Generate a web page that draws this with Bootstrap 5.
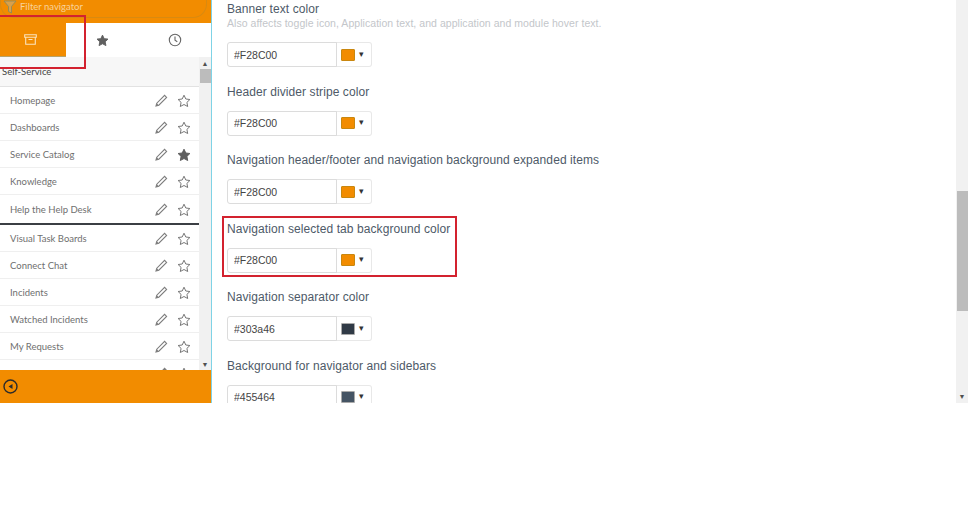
<!DOCTYPE html>
<html lang="en">
<head>
    <meta charset="UTF-8">
    <title>Theme colors</title>
    <link rel="stylesheet" href="https://cdn.jsdelivr.net/npm/bootstrap@5.3.0/dist/css/bootstrap.min.css">
    <style>
        body { background: #fff; font-family: "Liberation Sans", Arial, sans-serif; overflow: hidden; }
        .app-frame { height: 403px; width: 968px; position: relative; overflow: hidden; }

        /* left navigator */
        .nav-side { width: 212px; border-right: 1px solid #7fd3e6; flex: none; font-family: Lato, sans-serif; }
        .filter-bar { height: 23px; background: #f28c00; flex: none; overflow: hidden; padding: 0 4px 0 0; }
        .filter-pill { height: 18px; border: 1px solid #d98a10; border-top: 0; border-radius: 0 0 14px 14px; font-size: 9.5px; color: #f9d29a; padding-left: 19px; line-height: 14px; position: relative; }
        .filter-pill svg { position: absolute; left: 2px; top: 0; }
        .tab-row { height: 34px; flex: none; }
        .tab-item { height: 34px; }
        .tab-on { width: 66px; background: #f28c00; border-bottom: 1px solid #b7a36b; padding-right: 6px; }
        .tab-off { width: 72px; }
        .tab-clock { padding-left: 2px; }
        .nav-body { min-height: 0; }
        .nav-list { overflow: hidden; }
        .group-head { height: 30px; background: #f7f7f7; border-bottom: 1px solid #e2e2e2; font-size: 9.5px; color: #444; padding: 9px 0 0 2px; line-height: 12px; }
        .nav-row { height: 27.1px; border-bottom: 1px solid #efefef; font-size: 9.5px; color: #6f6f6f; padding: 2px 8px 0 10px; flex: none; }
        .nav-row.sep { border-bottom: 2px solid #3b3f44; height: 30px; }
        .nav-row.low { height: 27px; }
        .icon-pair { gap: 9px; }
        .scroll-rail { width: 12px; background: #f1f1f1; flex: none; position: relative; }
        .scroll-arrow { height: 12px; color: #505050; font-size: 7px; line-height: 12px; text-align: center; flex: none; }
        .scroll-thumb { background: #bcbcbc; margin-left: 1px; }
        .thumb-nav { height: 14px; }
        .nav-foot { height: 33px; background: #f28c00; flex: none; padding-left: 3px; }

        /* main settings column */
        .main-col { min-width: 0; overflow: hidden; }
        .main-inner { padding: 0 0 0 15px; }
        .set-block { height: 68.5px; padding-top: 17px; }
        .set-block.first { height: 65.5px; padding-top: 0; }
        .set-title { font-size: 12px; line-height: 18px; color: #4e5a68; letter-spacing: .08px; }
        .set-hint { font-size: 10.5px; line-height: 13px; color: #c3c6ca; letter-spacing: .05px; margin-top: -1px; }
        .set-gap { padding-top: 10px; }
        .set-gap.with-hint { padding-top: 12px; }
        .color-group { width: 145px; height: 25px; flex-wrap: nowrap; }
        .color-group .form-control { height: 25px; min-height: 25px; font-size: 10.5px; font-family: "Liberation Sans", Arial, sans-serif; color: #444; padding: 0 6px; border-color: #dcdcdc; border-radius: 3px 0 0 3px; box-shadow: none; }
        .color-btn { width: 36px; flex: none; height: 25px; padding: 0 0 0 4px; border: 1px solid #e8e8e8; border-left-color: #cfcfcf; border-radius: 0 3px 3px 0; background: #fff; font-size: 9px; color: #333; gap: 4px; }
        .swatch { width: 14px; height: 12px; border: 1px solid #a9a9a9; flex: none; border-radius: 1px; }
        .c-orange { background: #f28c00; border-color: #c9870f; }
        .c-navy { background: #303a46; }
        .c-slate { background: #455464; }
        .main-rail { height: 403px; }
        .thumb-main { height: 120px; margin-top: 191px; }
        .rail-fill { min-height: 0; }

        /* red annotation boxes */
        .callout { position: absolute; border: 2px solid #d3222f; pointer-events: none; }
        .callout-tab { left: -2px; top: 15px; width: 88px; height: 54px; }
        .callout-set { left: 222px; top: 216px; width: 235px; height: 61px; }
    </style>
</head>
<body>
    <svg width="0" height="0" class="position-absolute">
        <symbol id="pen" viewBox="0 0 14 14">
            <path d="M2 12l.8-2.8L10.6 1.4l2 2-7.8 7.8z" fill="none" stroke="#7d7d7d" stroke-width="1.1"/>
            <path d="M2 12l.8-2.8 2 2z" fill="#7d7d7d"/>
        </symbol>
        <symbol id="star" viewBox="0 0 14 14">
            <path d="M7 1.2l1.8 3.8 4.1.5-3 2.9.8 4.1L7 10.5l-3.7 2 .8-4.1-3-2.9 4.1-.5z" fill="none" stroke="#777" stroke-width="1"/>
        </symbol>
        <symbol id="star-on" viewBox="0 0 14 14">
            <path d="M7 1.2l1.8 3.8 4.1.5-3 2.9.8 4.1L7 10.5l-3.7 2 .8-4.1-3-2.9 4.1-.5z" fill="#5f5f5f" stroke="#5f5f5f" stroke-width="1"/>
        </symbol>
    </svg>

    <div class="app-frame d-flex">
        <aside class="nav-side d-flex flex-column">
            <div class="filter-bar">
                <div class="filter-pill">
                    <svg width="14" height="14" viewBox="0 0 14 14"><path d="M1 1h12L8.500 6.500V13l-3-1.500V6.500z" fill="#d9a04a" stroke="#8f8a5a" stroke-width=".9"/></svg>
                    Filter navigator
                </div>
            </div>
            <div class="tab-row d-flex">
                <div class="tab-item tab-on d-flex align-items-center justify-content-center">
                    <svg width="13" height="11" viewBox="0 0 13 11"><path d="M.7.7h11.600v2.600H.7zM1.700 3.300h9.600v7H1.700zM4.500 5.500h4" fill="none" stroke="#fbe3bd" stroke-width="1.100"/></svg>
                </div>
                <div class="tab-item tab-off d-flex align-items-center justify-content-center">
                    <svg width="13" height="13"><use href="#star-on"/></svg>
                </div>
                <div class="tab-item tab-off tab-clock d-flex align-items-center justify-content-center">
                    <svg width="14" height="14" viewBox="0 0 14 14"><circle cx="7" cy="7" r="5.700" fill="none" stroke="#666" stroke-width="1.100"/><path d="M7 3.500V7.300l2.300 1.500" fill="none" stroke="#666" stroke-width="1.100"/></svg>
                </div>
            </div>
            <div class="nav-body d-flex flex-grow-1">
                <div class="nav-list flex-grow-1 d-flex flex-column">
                    <div class="group-head flex-shrink-0">Self-Service</div>
                    <div class="nav-row d-flex align-items-center justify-content-between"><span>Homepage</span><span class="icon-pair d-flex"><svg width="14" height="14"><use href="#pen"/></svg><svg width="14" height="14"><use href="#star"/></svg></span></div>
                    <div class="nav-row d-flex align-items-center justify-content-between"><span>Dashboards</span><span class="icon-pair d-flex"><svg width="14" height="14"><use href="#pen"/></svg><svg width="14" height="14"><use href="#star"/></svg></span></div>
                    <div class="nav-row d-flex align-items-center justify-content-between"><span>Service Catalog</span><span class="icon-pair d-flex"><svg width="14" height="14"><use href="#pen"/></svg><svg width="14" height="14"><use href="#star-on"/></svg></span></div>
                    <div class="nav-row d-flex align-items-center justify-content-between"><span>Knowledge</span><span class="icon-pair d-flex"><svg width="14" height="14"><use href="#pen"/></svg><svg width="14" height="14"><use href="#star"/></svg></span></div>
                    <div class="nav-row sep d-flex align-items-center justify-content-between"><span>Help the Help Desk</span><span class="icon-pair d-flex"><svg width="14" height="14"><use href="#pen"/></svg><svg width="14" height="14"><use href="#star"/></svg></span></div>
                    <div class="nav-row low d-flex align-items-center justify-content-between"><span>Visual Task Boards</span><span class="icon-pair d-flex"><svg width="14" height="14"><use href="#pen"/></svg><svg width="14" height="14"><use href="#star"/></svg></span></div>
                    <div class="nav-row low d-flex align-items-center justify-content-between"><span>Connect Chat</span><span class="icon-pair d-flex"><svg width="14" height="14"><use href="#pen"/></svg><svg width="14" height="14"><use href="#star"/></svg></span></div>
                    <div class="nav-row low d-flex align-items-center justify-content-between"><span>Incidents</span><span class="icon-pair d-flex"><svg width="14" height="14"><use href="#pen"/></svg><svg width="14" height="14"><use href="#star"/></svg></span></div>
                    <div class="nav-row low d-flex align-items-center justify-content-between"><span>Watched Incidents</span><span class="icon-pair d-flex"><svg width="14" height="14"><use href="#pen"/></svg><svg width="14" height="14"><use href="#star"/></svg></span></div>
                    <div class="nav-row low d-flex align-items-center justify-content-between"><span>My Requests</span><span class="icon-pair d-flex"><svg width="14" height="14"><use href="#pen"/></svg><svg width="14" height="14"><use href="#star"/></svg></span></div>
                    <div class="nav-row low d-flex align-items-center justify-content-end"><span class="icon-pair d-flex"><svg width="14" height="14"><use href="#pen"/></svg><svg width="14" height="14"><use href="#star"/></svg></span></div>
                </div>
                <div class="scroll-rail d-flex flex-column">
                    <div class="scroll-arrow">&#9650;</div>
                    <div class="scroll-thumb thumb-nav"></div>
                    <div class="rail-fill flex-grow-1"></div>
                    <div class="scroll-arrow">&#9660;</div>
                </div>
            </div>
            <div class="nav-foot d-flex align-items-center">
                <svg width="15" height="15" viewBox="0 0 15 15"><circle cx="7.500" cy="7.500" r="6.500" fill="none" stroke="#2b2b2b" stroke-width="1.400"/><path d="M9.500 5v5L5.500 7.500z" fill="#2b2b2b"/></svg>
            </div>
        </aside>

        <main class="main-col flex-grow-1 d-flex">
            <div class="flex-grow-1 overflow-hidden">
                <div class="main-inner">
                    <div class="set-block first">
                        <div class="set-title">Banner text color</div>
                        <div class="set-hint">Also affects toggle icon, Application text, and application and module hover text.</div>
                        <div class="set-gap with-hint">
                            <div class="input-group color-group"><input class="form-control" value="#F28C00"><button class="color-btn d-flex align-items-center" type="button"><span class="swatch c-orange"></span>&#9662;</button></div>
                        </div>
                    </div>
                    <div class="set-block">
                        <div class="set-title">Header divider stripe color</div>
                        <div class="set-gap"><div class="input-group color-group"><input class="form-control" value="#F28C00"><button class="color-btn d-flex align-items-center" type="button"><span class="swatch c-orange"></span>&#9662;</button></div></div>
                    </div>
                    <div class="set-block">
                        <div class="set-title">Navigation header/footer and navigation background expanded items</div>
                        <div class="set-gap"><div class="input-group color-group"><input class="form-control" value="#F28C00"><button class="color-btn d-flex align-items-center" type="button"><span class="swatch c-orange"></span>&#9662;</button></div></div>
                    </div>
                    <div class="set-block">
                        <div class="set-title">Navigation selected tab background color</div>
                        <div class="set-gap"><div class="input-group color-group"><input class="form-control" value="#F28C00"><button class="color-btn d-flex align-items-center" type="button"><span class="swatch c-orange"></span>&#9662;</button></div></div>
                    </div>
                    <div class="set-block">
                        <div class="set-title">Navigation separator color</div>
                        <div class="set-gap"><div class="input-group color-group"><input class="form-control" value="#303a46"><button class="color-btn d-flex align-items-center" type="button"><span class="swatch c-navy"></span>&#9662;</button></div></div>
                    </div>
                    <div class="set-block">
                        <div class="set-title">Background for navigator and sidebars</div>
                        <div class="set-gap"><div class="input-group color-group"><input class="form-control" value="#455464"><button class="color-btn d-flex align-items-center" type="button"><span class="swatch c-slate"></span>&#9662;</button></div></div>
                    </div>
                </div>
            </div>
            <div class="scroll-rail main-rail d-flex flex-column">
                <div class="scroll-thumb thumb-main"></div>
                <div class="rail-fill flex-grow-1"></div>
                <div class="scroll-arrow">&#9660;</div>
            </div>
        </main>

        <div class="callout callout-tab"></div>
        <div class="callout callout-set"></div>
    </div>
    <script src="https://cdn.jsdelivr.net/npm/bootstrap@5.3.0/dist/js/bootstrap.bundle.min.js"></script>
</body>
</html>
